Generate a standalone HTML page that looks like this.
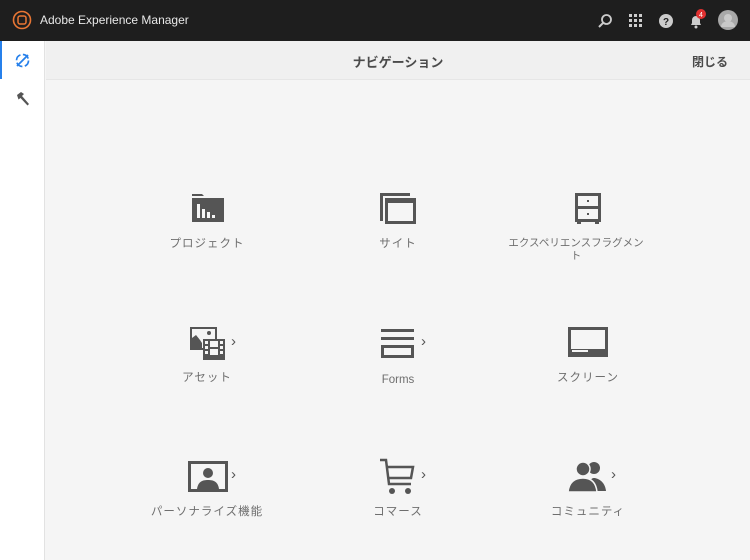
<!DOCTYPE html>
<html><head><meta charset="utf-8"><style>
*{margin:0;padding:0;box-sizing:border-box}
body{width:750px;height:560px;overflow:hidden;background:#f5f5f5;font-family:"Liberation Sans","Noto Sans CJK JP",sans-serif;position:relative}
.top{position:absolute;left:0;top:0;width:750px;height:41px;background:#1e1e1e}
.top .t{position:absolute;left:40px;top:13px;color:#e8e8e8;font-size:12px}
.rail{position:absolute;left:0;top:41px;width:45px;height:519px;background:#fff;border-right:1px solid #e2e2e2}
.rail .sel{position:absolute;left:0;top:0;width:2px;height:38px;background:#2680eb}
.hdr{position:absolute;left:46px;top:41px;width:704px;height:39px;background:#f0f0f0;border-bottom:1px solid #e6e6e6}
.hdr .ti{position:absolute;left:0;width:704px;text-align:center;top:11px;font-size:13px;font-weight:bold;color:#4b4b4b}
.hdr .cl{position:absolute;right:22px;top:12px;font-size:12px;font-weight:bold;color:#4b4b4b}
.item{position:absolute;width:180px;text-align:center;font-size:11.5px;color:#6e6e6e;line-height:14px;letter-spacing:1px}
svg{position:absolute}
.chev{position:absolute;font-size:15px;color:#555}
</style></head><body>
<div class="top">
<svg style="left:12px;top:10px" width="20" height="20" viewBox="0 0 20 20"><circle cx="10" cy="10" r="8.5" fill="none" stroke="#e87634" stroke-width="1.6"/><rect x="6" y="6" width="8" height="8" rx="2" fill="none" stroke="#e87634" stroke-width="1.5"/></svg>
<div class="t">Adobe Experience Manager</div>
<svg style="left:597px;top:13px" width="16" height="16" viewBox="0 0 16 16"><circle cx="9.5" cy="6.5" r="4.5" fill="none" stroke="#ccc" stroke-width="1.8"/><path d="M6.3 9.7L2 14" stroke="#ccc" stroke-width="2"/></svg>
<svg style="left:629px;top:14px" width="13" height="13" viewBox="0 0 13 13" fill="#ccc"><rect x="0" y="0" width="3" height="3"/><rect x="5" y="0" width="3" height="3"/><rect x="10" y="0" width="3" height="3"/><rect x="0" y="5" width="3" height="3"/><rect x="5" y="5" width="3" height="3"/><rect x="10" y="5" width="3" height="3"/><rect x="0" y="10" width="3" height="3"/><rect x="5" y="10" width="3" height="3"/><rect x="10" y="10" width="3" height="3"/></svg>
<svg style="left:659px;top:14px" width="14" height="14" viewBox="0 0 14 14"><circle cx="7" cy="7" r="7" fill="#ccc"/><text x="7" y="11" text-anchor="middle" font-size="10" font-weight="bold" fill="#1e1e1e" font-family="Liberation Sans">?</text></svg>
<svg style="left:689px;top:14px" width="14" height="15" viewBox="0 0 14 15"><path d="M2 11L3 9V6a4 4 0 0 1 8 0v3l1 2z" fill="#ccc"/><circle cx="7" cy="13" r="1.5" fill="#ccc"/></svg>
<svg style="left:696px;top:9px" width="10" height="10"><circle cx="5" cy="5" r="5" fill="#e03030"/><text x="5" y="8" text-anchor="middle" font-size="7" fill="#fff" font-family="Liberation Sans">4</text></svg>
<svg style="left:718px;top:10px" width="20" height="20" viewBox="0 0 20 20"><circle cx="10" cy="10" r="10" fill="#a8a8a8"/><circle cx="10" cy="8" r="4" fill="#c9c9c9"/><path d="M3 17a7 6 0 0 1 14 0" fill="#c9c9c9"/></svg>
</div>
<div class="rail"><div class="sel"></div>
<svg style="left:14px;top:11px" width="17" height="17" viewBox="0 0 17 17"><circle cx="8.5" cy="8.5" r="6" fill="none" stroke="#2680eb" stroke-width="1.7" stroke-dasharray="7 2.5"/><path d="M3 14L14 3" stroke="#2680eb" stroke-width="1.8"/></svg>
<svg style="left:15px;top:50px" width="15" height="15" viewBox="0 0 15 15"><path d="M2 4l4-3 3 2-2 2 7 8-1.5 1.5-7-7.5-2 1.5z" fill="#555"/></svg>
</div>
<div class="hdr"><div class="ti">ナビゲーション</div><div class="cl">閉じる</div></div>

<svg style="left:191px;top:192px" width="33" height="32" viewBox="0 0 33 32"><path d="M1 2h10l2 2H1z" fill="#555"/><rect x="1" y="6" width="32" height="24" fill="#555"/><rect x="6" y="12" width="3" height="14" fill="#f5f5f5"/><rect x="11" y="17" width="3" height="9" fill="#f5f5f5"/><rect x="16" y="20" width="3" height="6" fill="#f5f5f5"/><rect x="21" y="23" width="3" height="3" fill="#f5f5f5"/></svg>
<div class="item" style="left:117px;top:237px">プロジェクト</div>
<svg style="left:379px;top:192px" width="38" height="33" viewBox="0 0 38 33"><path d="M1 1h30v3H4v25H1z" fill="#555"/><rect x="7.5" y="7.5" width="28" height="23" fill="none" stroke="#555" stroke-width="3"/><rect x="6" y="6" width="31" height="5" fill="#555"/></svg>
<div class="item" style="left:308px;top:237px">サイト</div>
<svg style="left:575px;top:193px" width="26" height="32" viewBox="0 0 26 32"><rect x="1.5" y="1.5" width="23" height="26" fill="none" stroke="#555" stroke-width="3"/><rect x="1" y="13" width="24" height="3" fill="#555"/><rect x="12" y="7" width="2" height="2" fill="#555"/><rect x="12" y="20" width="2" height="2" fill="#555"/><rect x="2" y="27" width="4" height="4" fill="#555"/><rect x="20" y="27" width="4" height="4" fill="#555"/></svg>
<div class="item" style="left:505px;top:237px;width:142px;letter-spacing:0;font-size:10.5px;line-height:13px">エクスペリエンスフラグメント</div>

<svg style="left:189px;top:326px" width="38" height="35" viewBox="0 0 38 35"><rect x="1" y="1" width="27" height="23" fill="#555"/><path d="M3 3h23v19H3z" fill="#f5f5f5"/><path d="M3 22V12l4-3 4 5 2 3v5z" fill="#555"/><circle cx="20" cy="7" r="2" fill="#555"/><rect x="14" y="13" width="22" height="21" fill="#555"/><rect x="16" y="15" width="3" height="3" fill="#f5f5f5"/><rect x="16" y="20" width="3" height="3" fill="#f5f5f5"/><rect x="16" y="25" width="3" height="3" fill="#f5f5f5"/><rect x="31" y="15" width="3" height="3" fill="#f5f5f5"/><rect x="31" y="20" width="3" height="3" fill="#f5f5f5"/><rect x="31" y="25" width="3" height="3" fill="#f5f5f5"/><rect x="21" y="15" width="8" height="6" fill="#f5f5f5"/><rect x="21" y="23" width="8" height="6" fill="#f5f5f5"/></svg>
<div class="chev" style="left:231px;top:333px">›</div>
<div class="item" style="left:117px;top:371px">アセット</div>
<svg style="left:381px;top:329px" width="33" height="29" viewBox="0 0 33 29"><rect x="0" y="0" width="33" height="3" fill="#555"/><rect x="0" y="8" width="33" height="3" fill="#555"/><rect x="1.5" y="17.5" width="30" height="10" fill="none" stroke="#555" stroke-width="3"/></svg>
<div class="chev" style="left:421px;top:333px">›</div>
<div class="item" style="left:308px;top:373px;letter-spacing:0">Forms</div>
<svg style="left:568px;top:327px" width="40" height="30" viewBox="0 0 40 30"><rect x="1.5" y="1.5" width="37" height="27" fill="none" stroke="#555" stroke-width="3"/><rect x="1" y="22" width="38" height="7" fill="#555"/><rect x="4" y="23" width="16" height="2" fill="#f5f5f5"/></svg>
<div class="item" style="left:498px;top:371px">スクリーン</div>

<svg style="left:188px;top:461px" width="40" height="31" viewBox="0 0 40 31"><rect x="1.5" y="1.5" width="37" height="28" fill="none" stroke="#555" stroke-width="3"/><circle cx="20" cy="12" r="5" fill="#555"/><path d="M9 28c1-7 5-9 11-9s10 2 11 9z" fill="#555"/></svg>
<div class="chev" style="left:231px;top:466px">›</div>
<div class="item" style="left:117px;top:505px">パーソナライズ機能</div>
<svg style="left:379px;top:458px" width="36" height="37" viewBox="0 0 36 37"><path d="M1 2h6l3 24h22" fill="none" stroke="#555" stroke-width="2.5"/><path d="M8 9h26l-2 11H9" fill="none" stroke="#555" stroke-width="2.5"/><circle cx="13" cy="33" r="3" fill="#555"/><circle cx="29" cy="33" r="3" fill="#555"/></svg>
<div class="chev" style="left:421px;top:466px">›</div>
<div class="item" style="left:308px;top:505px">コマース</div>
<svg style="left:568px;top:459px" width="40" height="34" viewBox="0 0 40 34"><circle cx="26" cy="9" r="6" fill="#555"/><path d="M20 32c0-9 3-13 6-13s11 3 12 13z" fill="#555"/><circle cx="15" cy="10" r="7" fill="#555" stroke="#f5f5f5" stroke-width="1.5"/><path d="M0 33c1-10 7-14 15-14s13 4 14 14z" fill="#555" stroke="#f5f5f5" stroke-width="1.5"/></svg>
<div class="chev" style="left:611px;top:466px">›</div>
<div class="item" style="left:498px;top:505px">コミュニティ</div>
</body></html>
